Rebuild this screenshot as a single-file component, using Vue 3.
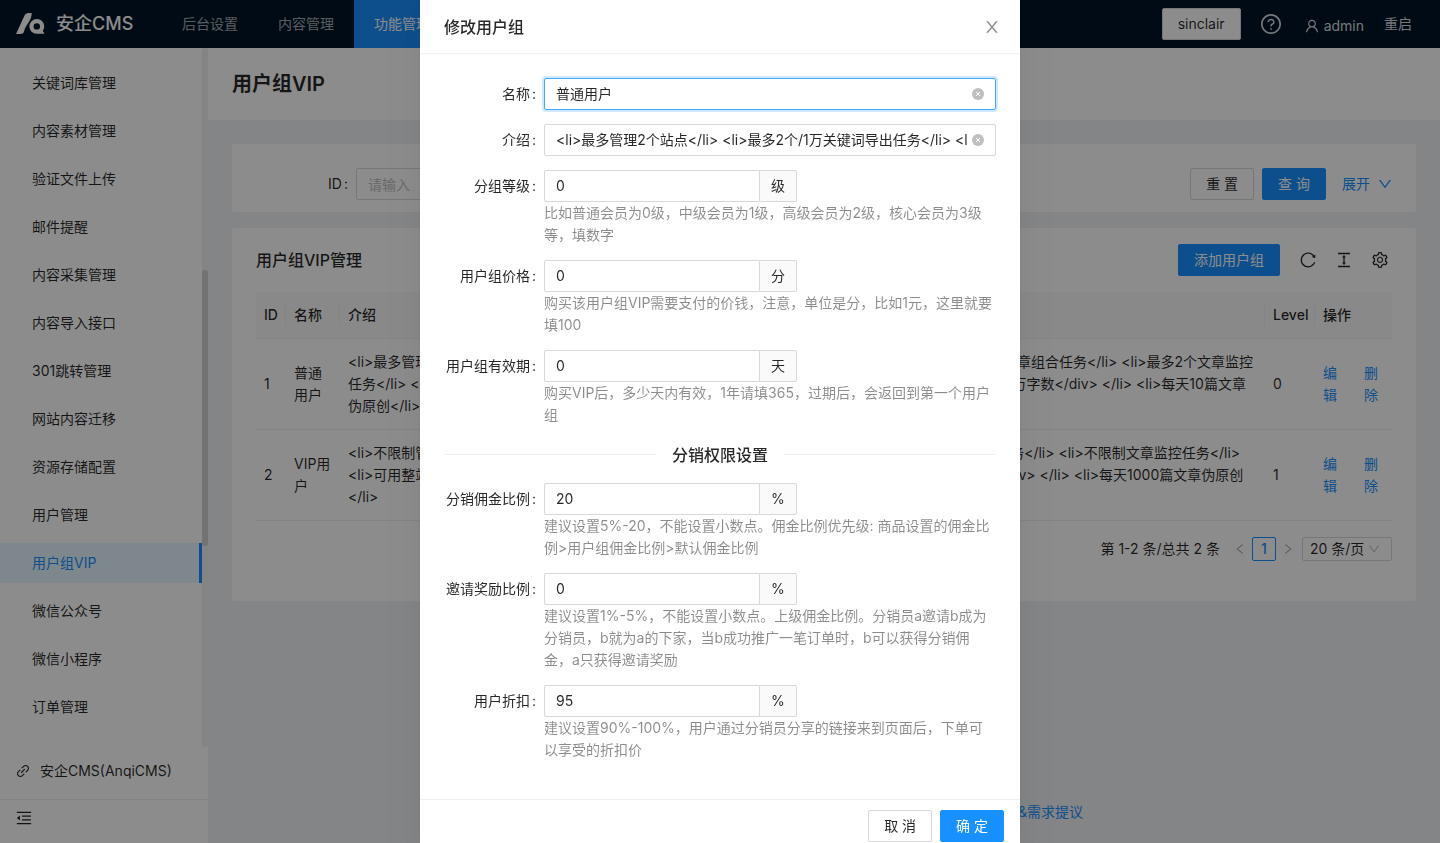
<script setup>
import { ref } from 'vue'

const icons = {
  question: 'M512 64C264.6 64 64 264.6 64 512s200.6 448 448 448 448-200.6 448-448S759.4 64 512 64zm0 820c-205.4 0-372-166.6-372-372s166.6-372 372-372 372 166.6 372 372-166.6 372-372 372zM623.6 316.7C593.6 290.4 554 276 512 276s-81.6 14.5-111.6 40.7C369.2 344 352 380.7 352 420v7.6c0 4.4 3.6 8 8 8h48c4.4 0 8-3.6 8-8V420c0-44.1 43.1-80 96-80s96 35.9 96 80c0 31.1-22 59.6-56.1 72.7-21.2 8.1-39.2 22.3-52.1 40.9-13.1 19-19.9 41.8-19.9 64.9V620c0 4.4 3.6 8 8 8h48c4.4 0 8-3.6 8-8v-22.7a48.3 48.3 0 0130.9-44.8c59-22.7 97.1-74.7 97.1-132.5.1-39.3-17.1-76-48.3-103.3zM472 732a40 40 0 1080 0 40 40 0 10-80 0z',
  user: 'M858.5 763.6a374 374 0 00-80.6-119.5 375.63 375.63 0 00-119.5-80.6c-.4-.2-.8-.3-1.2-.5C719.5 518 760 444.7 760 362c0-137-111-248-248-248S264 225 264 362c0 82.7 40.5 156 102.8 201.1-.4.2-.8.3-1.2.5-44.8 18.9-85 46-119.5 80.6a375.63 375.63 0 00-80.6 119.5A371.7 371.7 0 00136 901.8a8 8 0 008 8.2h60c4.4 0 7.9-3.5 8-7.8 2-77.2 33-149.5 87.8-204.3 56.7-56.7 132-87.9 212.2-87.9s155.5 31.2 212.2 87.9C779 752.7 810 825 812 902.2c.1 4.4 3.6 7.8 8 7.8h60a8 8 0 008-8.2c-1-47.8-10.9-94.3-29.5-138.2zM512 534c-45.9 0-89.1-17.9-121.6-50.4S340 407.9 340 362c0-45.9 17.9-89.1 50.4-121.6S466.1 190 512 190s89.1 17.9 121.6 50.4S684 316.1 684 362c0 45.9-17.9 89.1-50.4 121.6S557.9 534 512 534z',
  close: 'M563.8 512l262.5-312.9c4.4-5.2.7-13.1-6.1-13.1h-79.8c-4.7 0-9.2 2.1-12.3 5.7L511.6 449.8 295.1 191.7c-3-3.6-7.5-5.7-12.3-5.7H203c-6.8 0-10.5 7.9-6.1 13.1L459.4 512 196.9 824.9A7.95 7.95 0 00203 838h79.8c4.7 0 9.2-2.1 12.3-5.7l216.5-258.1 216.5 258.1c3 3.6 7.5 5.7 12.3 5.7h79.8c6.8 0 10.5-7.9 6.1-13.1L563.8 512z',
  down: 'M884 256h-75c-5.1 0-9.9 2.5-12.9 6.6L512 654.2 227.9 262.6c-3-4.1-7.8-6.6-12.9-6.6h-75c-6.5 0-10.3 7.4-6.5 12.7l352.6 486.1c12.8 17.6 39 17.6 51.7 0l352.6-486.1c3.9-5.3.1-12.7-6.4-12.7z',
  left: 'M724 218.3V141c0-6.7-7.7-10.4-12.9-6.3L260.3 486.8a31.86 31.86 0 000 50.3l450.8 352.1c5.3 4.1 12.9.4 12.9-6.3v-77.3c0-4.9-2.3-9.6-6.1-12.6l-360-281 360-281.1c3.8-3 6.1-7.7 6.1-12.6z',
  right: 'M765.7 486.8L314.9 134.7A7.97 7.97 0 00302 141v77.3c0 4.9 2.3 9.6 6.1 12.6l360 281.1-360 281.1c-3.9 3-6.1 7.7-6.1 12.6V883c0 6.7 7.7 10.4 12.9 6.3l450.8-352.1a31.96 31.96 0 000-50.4z',
  reload: 'M909.1 209.3l-56.4 44.1C775.8 155.1 656.2 92 521.9 92 290 92 102.3 279.5 102 511.5 101.7 743.7 289.8 932 521.9 932c181.3 0 335.8-115 394.6-276.1 1.5-4.2-.7-8.9-4.9-10.3l-56.7-19.5a8 8 0 00-10.1 4.8c-1.8 5-3.8 10-5.9 14.9-17.3 41-42.1 77.8-73.7 109.4A344.77 344.77 0 01655.9 829c-42.3 17.9-87.4 27-133.8 27-46.5 0-91.5-9.1-133.8-27A341.5 341.5 0 01279 755.2a342.16 342.16 0 01-73.7-109.4c-17.9-42.4-27-87.4-27-133.9s9.1-91.5 27-133.9c17.3-41 42.1-77.8 73.7-109.4 31.6-31.6 68.4-56.4 109.3-73.8 42.3-17.9 87.4-27 133.8-27 46.5 0 91.5 9.1 133.8 27a341.5 341.5 0 01109.3 73.8c9.9 9.9 19.2 20.4 27.8 31.4l-60.2 47a8 8 0 003 14.1l175.6 43c5 1.2 9.9-2.6 9.9-7.7l.8-180.9c-.1-6.6-7.8-10.3-13-6.2z',
  height: 'M840 836H184c-4.4 0-8 3.6-8 8v60c0 4.4 3.6 8 8 8h656c4.4 0 8-3.6 8-8v-60c0-4.4-3.6-8-8-8zm0-724H184c-4.4 0-8 3.6-8 8v60c0 4.4 3.6 8 8 8h656c4.4 0 8-3.6 8-8v-60c0-4.4-3.6-8-8-8zM610.8 378c6 0 9.4-7 5.7-11.7L515.7 238.7a7.14 7.14 0 00-11.3 0L403.6 366.3a7.23 7.23 0 005.7 11.7H476v268h-62.8c-6 0-9.4 7-5.7 11.7l100.8 127.5c2.9 3.7 8.5 3.7 11.3 0l100.8-127.5c3.7-4.7.4-11.7-5.7-11.7H548V378h62.8z',
  setting: 'M924.8 625.7l-65.5-56c3.1-19 4.7-38.4 4.7-57.8s-1.6-38.8-4.7-57.8l65.5-56a32.03 32.03 0 009.3-35.2l-.9-2.6a443.74 443.74 0 00-79.7-137.9l-1.8-2.1a32.12 32.12 0 00-35.1-9.5l-81.3 28.9c-30-24.6-63.5-44-99.7-57.6l-15.7-85a32.05 32.05 0 00-25.8-25.7l-2.7-.5c-52.1-9.4-106.9-9.4-159 0l-2.7.5a32.05 32.05 0 00-25.8 25.7l-15.8 85.4a351.86 351.86 0 00-99 57.4l-81.9-29.1a32 32 0 00-35.1 9.5l-1.8 2.1a446.02 446.02 0 00-79.7 137.9l-.9 2.6c-4.5 12.5-.8 26.5 9.3 35.2l66.3 56.6c-3.1 18.8-4.6 38-4.6 57.1 0 19.2 1.5 38.4 4.6 57.1L99 625.5a32.03 32.03 0 00-9.3 35.2l.9 2.6c18.1 50.4 44.9 96.9 79.7 137.9l1.8 2.1a32.12 32.12 0 0035.1 9.5l81.9-29.1c29.8 24.5 63.1 43.9 99 57.4l15.8 85.4a32.05 32.05 0 0025.8 25.7l2.7.5a449.4 449.4 0 00159 0l2.7-.5a32.05 32.05 0 0025.8-25.7l15.7-85a350 350 0 0099.7-57.6l81.3 28.9a32 32 0 0035.1-9.5l1.8-2.1c34.8-41.1 61.6-87.5 79.7-137.9l.9-2.6c4.5-12.3.8-26.3-9.3-35zM788.3 465.9c2.5 15.1 3.8 30.6 3.8 46.1s-1.3 31-3.8 46.1l-6.6 40.1 74.7 63.9a370.03 370.03 0 01-42.6 73.6L721 702.8l-31.4 25.8c-23.9 19.6-50.5 35-79.3 45.8l-38.1 14.3-17.9 97a377.5 377.5 0 01-85 0l-17.9-97.2-37.8-14.5c-28.5-10.8-55-26.2-78.7-45.7l-31.4-25.9-93.4 33.2c-17-22.9-31.2-47.6-42.6-73.6l75.5-64.5-6.5-40c-2.4-14.9-3.7-30.3-3.7-45.5 0-15.3 1.2-30.6 3.7-45.5l6.5-40-75.5-64.5c11.3-26.1 25.6-50.7 42.6-73.6l93.4 33.2 31.4-25.9c23.7-19.5 50.2-34.9 78.7-45.7l37.9-14.3 17.9-97.2c28.1-3.2 56.8-3.2 85 0l17.9 97 38.1 14.3c28.7 10.8 55.4 26.2 79.3 45.8l31.4 25.8 92.8-32.9c17 22.9 31.2 47.6 42.6 73.6L781.8 426l6.5 39.9zM512 326c-97.2 0-176 78.8-176 176s78.8 176 176 176 176-78.8 176-176-78.8-176-176-176zm79.2 255.2A111.6 111.6 0 01512 614c-29.9 0-58-11.7-79.2-32.8A111.6 111.6 0 01400 502c0-29.9 11.7-58 32.8-79.2C454 401.6 482.1 390 512 390c29.9 0 58 11.6 79.2 32.8A111.6 111.6 0 01624 502c0 29.9-11.7 58-32.8 79.2z',
  link: 'M574 665.4a8.03 8.03 0 00-11.3 0L446.5 781.6c-53.8 53.8-144.6 59.5-204 0-59.5-59.5-53.8-150.2 0-204l116.2-116.2c3.1-3.1 3.1-8.2 0-11.3l-39.8-39.8a8.03 8.03 0 00-11.3 0L191.4 526.5c-84.6 84.6-84.6 221.5 0 306s221.5 84.6 306 0l116.2-116.2c3.1-3.1 3.1-8.2 0-11.3L574 665.4zm258.6-474c-84.6-84.6-221.5-84.6-306 0L410.3 307.6a8.03 8.03 0 000 11.3l39.7 39.7c3.1 3.1 8.2 3.1 11.3 0l116.2-116.2c53.8-53.8 144.6-59.5 204 0 59.5 59.5 53.8 150.2 0 204L665.3 562.6a8.03 8.03 0 000 11.3l39.8 39.8c3.1 3.1 8.2 3.1 11.3 0l116.2-116.2c84.5-84.6 84.5-221.5 0-306.1zM610.1 372.3a8.03 8.03 0 00-11.3 0L372.3 598.7a8.03 8.03 0 000 11.3l39.6 39.6c3.1 3.1 8.2 3.1 11.3 0l226.4-226.4c3.1-3.1 3.1-8.2 0-11.3l-39.5-39.6z',
  fold: 'M408 442h480c4.4 0 8-3.6 8-8v-56c0-4.4-3.6-8-8-8H408c-4.4 0-8 3.6-8 8v56c0 4.4 3.6 8 8 8zm-8 204c0 4.4 3.6 8 8 8h480c4.4 0 8-3.6 8-8v-56c0-4.4-3.6-8-8-8H408c-4.4 0-8 3.6-8 8v56zm504-486H120c-4.4 0-8 3.6-8 8v56c0 4.4 3.6 8 8 8h784c4.4 0 8-3.6 8-8v-56c0-4.4-3.6-8-8-8zm0 632H120c-4.4 0-8 3.6-8 8v56c0 4.4 3.6 8 8 8h784c4.4 0 8-3.6 8-8v-56c0-4.4-3.6-8-8-8zM115.4 518.9L271.7 642c5.8 4.6 14.4.5 14.4-6.9V388.9c0-7.4-8.5-11.5-14.4-6.9L115.4 505.1a8.74 8.74 0 000 13.8z'
}

const topMenu = ['后台设置', '内容管理', '功能管理']
const sideMenu = [
  '关键词库管理', '内容素材管理', '验证文件上传', '邮件提醒', '内容采集管理',
  '内容导入接口', '301跳转管理', '网站内容迁移', '资源存储配置', '用户管理',
  '用户组VIP', '微信公众号', '微信小程序', '订单管理'
]
const activeSide = '用户组VIP'

const rows = [
  {
    id: 1,
    name: '普通用户',
    lines: [
      '<li>最多管理2个站点</li> <li>最多2个/1万关键词导出任务</li> <li>最多2个伪原创任务</li> <li>最多2个文章组合任务</li> <li>最多2个文章监控',
      '任务</li> <li>可用整站克隆功能</li> <li>可用站群管理功能</li> <li> <div>每天可用于翻译的文章共计100万字数</div> </li> <li>每天10篇文章',
      '伪原创</li>'
    ],
    level: 0
  },
  {
    id: 2,
    name: 'VIP用户',
    lines: [
      '<li>不限制管理站点</li> <li>不限制关键词导出任务</li><li>不限制伪原创任务</li> <li>不限制文章组合任务</li> <li>不限制文章监控任务</li>',
      '<li>可用整站克隆功能</li> <li>可用站群管理功能</li> <li> <div>每天可用于翻译的文章共计100万字数</div> </li> <li>每天1000篇文章伪原创',
      '</li>'
    ],
    level: 1
  }
]

const name = ref('普通用户')
const intro = ref('<li>最多管理2个站点</li> <li>最多2个/1万关键词导出任务</li> <li>最多2个伪原创任务</li>')

const groupFields = ref([
  { key: 'level', label: '分组等级', value: '0', unit: '级', help: '比如普通会员为0级，中级会员为1级，高级会员为2级，核心会员为3级等，填数字' },
  { key: 'price', label: '用户组价格', value: '0', unit: '分', help: '购买该用户组VIP需要支付的价钱，注意，单位是分，比如1元，这里就要填100' },
  { key: 'expire', label: '用户组有效期', value: '0', unit: '天', help: '购买VIP后，多少天内有效，1年请填365，过期后，会返回到第一个用户组' }
])
const shareFields = ref([
  { key: 'share', label: '分销佣金比例', value: '20', unit: '%', help: '建议设置5%-20，不能设置小数点。佣金比例优先级: 商品设置的佣金比例>用户组佣金比例>默认佣金比例' },
  { key: 'parent', label: '邀请奖励比例', value: '0', unit: '%', help: '建议设置1%-5%，不能设置小数点。上级佣金比例。分销员a邀请b成为分销员，b就为a的下家，当b成功推广一笔订单时，b可以获得分销佣金，a只获得邀请奖励' },
  { key: 'discount', label: '用户折扣', value: '95', unit: '%', help: '建议设置90%-100%，用户通过分销员分享的链接来到页面后，下单可以享受的折扣价' }
])
</script>

<template>
  <div class="page">
    <header class="topbar">
      <a class="brand" href="#">
        <svg class="logo" viewBox="0 0 29 22" aria-hidden="true">
          <path d="M8.500 2.500C9.300 1 10.500 0 12.500 0H15.700C15.700 3 14.800 6 13.200 8.500C11 12 9 14 8 18.500C7.500 20.300 6.300 21 4.500 21H0Z" />
          <path fill-rule="evenodd" d="M20.800 6a7.400 7.400 0 1 0 0 14.800H28.500L26.700 17.800A7.400 7.400 0 0 0 20.800 6ZM20.800 10.200a3.200 3.200 0 1 1 0 6.400a3.200 3.200 0 0 1 0-6.400Z" />
        </svg>
        <span>安企CMS</span>
      </a>
      <nav class="topnav">
        <a v-for="(m, i) in topMenu" :key="m" href="#" :class="{ active: i === 2 }">{{ m }}</a>
      </nav>
      <div class="topright">
        <button class="btn site" type="button">sinclair</button>
        <button class="plain help" type="button" aria-label="帮助">
          <svg viewBox="64 64 896 896"><path :d="icons.question" /></svg>
        </button>
        <a class="who" href="#">
          <svg viewBox="64 64 896 896"><path :d="icons.user" /></svg>
          <span>admin</span>
        </a>
        <a href="#">重启</a>
      </div>
    </header>

    <div class="body">
      <aside class="side">
        <div class="side-scroll">
          <nav class="side-menu">
            <a v-for="m in sideMenu" :key="m" href="#" :class="{ active: m === activeSide }">{{ m }}</a>
          </nav>
          <div class="track"><div class="thumb"></div></div>
        </div>
        <a class="side-link" href="#">
          <svg viewBox="64 64 896 896"><path :d="icons.link" /></svg>
          <span>安企CMS(AnqiCMS)</span>
        </a>
        <button class="plain fold" type="button" aria-label="收起菜单">
          <svg viewBox="64 64 896 896"><path :d="icons.fold" /></svg>
        </button>
      </aside>

      <main class="main">
        <div class="page-head"><h1>用户组VIP</h1></div>
        <div class="content">
          <form class="card search" @submit.prevent>
            <label class="caption" for="search-id">ID</label>
            <input id="search-id" class="box" type="text" placeholder="请输入" />
            <div class="actions">
              <button class="btn" type="button">重 置</button>
              <button class="btn primary" type="submit">查 询</button>
              <a class="expand" href="#">展开
                <svg viewBox="64 64 896 896"><path :d="icons.down" /></svg>
              </a>
            </div>
          </form>

          <section class="card list">
            <div class="toolbar">
              <h2>用户组VIP管理</h2>
              <div class="tools">
                <button class="btn primary" type="button">添加用户组</button>
                <button v-for="t in ['reload', 'height', 'setting']" :key="t" class="plain tool" type="button" :aria-label="t">
                  <svg viewBox="64 64 896 896"><path :d="icons[t]" /></svg>
                </button>
              </div>
            </div>
            <table>
              <colgroup>
                <col class="c-id" /><col class="c-name" /><col /><col class="c-level" /><col class="c-op" />
              </colgroup>
              <thead>
                <tr><th>ID</th><th>名称</th><th>介绍</th><th>Level</th><th>操作</th></tr>
              </thead>
              <tbody>
                <tr v-for="r in rows" :key="r.id">
                  <td>{{ r.id }}</td>
                  <td>{{ r.name }}</td>
                  <td><span v-for="l in r.lines" :key="l" class="line">{{ l }}</span></td>
                  <td>{{ r.level }}</td>
                  <td>
                    <div class="ops"><a href="#">编辑</a><a href="#">删除</a></div>
                  </td>
                </tr>
              </tbody>
            </table>
            <div class="pager">
              <span class="total">第 1-2 条/总共 2 条</span>
              <button class="plain arrow" type="button" aria-label="上一页"><svg viewBox="64 64 896 896"><path :d="icons.left" /></svg></button>
              <button class="current" type="button">1</button>
              <button class="plain arrow" type="button" aria-label="下一页"><svg viewBox="64 64 896 896"><path :d="icons.right" /></svg></button>
              <div class="size">
                <select aria-label="每页条数"><option>20 条/页</option></select>
                <svg viewBox="64 64 896 896"><path :d="icons.down" /></svg>
              </div>
            </div>
          </section>
        </div>
        <footer class="foot">
          <a href="#">https://www.anqicms.com</a>
          <a href="#">安企内容管理系统(AnqiCMS)</a>
          <a href="#">问题反馈&amp;需求提议</a>
        </footer>
      </main>
    </div>

    <div class="mask">
      <form class="modal" role="dialog" aria-labelledby="modal-title" @submit.prevent>
        <div class="modal-head">
          <h2 id="modal-title">修改用户组</h2>
          <button class="plain" type="button" aria-label="关闭">
            <svg viewBox="64 64 896 896"><path :d="icons.close" /></svg>
          </button>
        </div>
        <div class="modal-body">
          <div class="field">
            <label class="caption" for="f-name">名称</label>
            <div class="box wide focused">
              <input id="f-name" v-model="name" type="text" />
              <button class="plain clear" type="button" aria-label="清空">
                <svg viewBox="0 0 12 12"><circle cx="6" cy="6" r="6" /><path d="M4 4l4 4M8 4L4 8" /></svg>
              </button>
            </div>
          </div>
          <div class="field">
            <label class="caption" for="f-intro">介绍</label>
            <div class="box wide">
              <input id="f-intro" v-model="intro" type="text" />
              <button class="plain clear" type="button" aria-label="清空">
                <svg viewBox="0 0 12 12"><circle cx="6" cy="6" r="6" /><path d="M4 4l4 4M8 4L4 8" /></svg>
              </button>
            </div>
          </div>
          <div v-for="f in groupFields" :key="f.key" class="field">
            <label class="caption" :for="'f-' + f.key">{{ f.label }}</label>
            <div>
              <div class="group">
                <input :id="'f-' + f.key" v-model="f.value" type="text" /><span>{{ f.unit }}</span>
              </div>
              <p>{{ f.help }}</p>
            </div>
          </div>
          <div class="divider">分销权限设置</div>
          <div v-for="f in shareFields" :key="f.key" class="field">
            <label class="caption" :for="'f-' + f.key">{{ f.label }}</label>
            <div>
              <div class="group">
                <input :id="'f-' + f.key" v-model="f.value" type="text" /><span>{{ f.unit }}</span>
              </div>
              <p>{{ f.help }}</p>
            </div>
          </div>
        </div>
        <div class="modal-foot">
          <button class="btn" type="button">取 消</button>
          <button class="btn primary" type="submit">确 定</button>
        </div>
      </form>
    </div>
  </div>
</template>

<style>
body { margin: 0; }
</style>

<style scoped>
.page, .page * { box-sizing: border-box; }
.page {
  height: 100vh;
  overflow: hidden;
  display: flex;
  flex-direction: column;
  background: #f0f2f5;
  color: rgba(0, 0, 0, .85);
  font: 14px/22px Inter, "Noto Sans CJK SC", sans-serif;
}
a { color: inherit; text-decoration: none; }
button, input, select { font: inherit; color: inherit; margin: 0; }
svg { display: block; width: 14px; height: 14px; fill: currentColor; flex: none; }
h1, h2, p { margin: 0; }
.plain { border: 0; background: none; padding: 0; display: flex; }
.btn {
  height: 32px;
  padding: 0 15px;
  border: 1px solid #d9d9d9;
  border-radius: 2px;
  background: #fff;
  white-space: nowrap;
}
.btn.primary { background: #1890ff; border-color: #1890ff; color: #fff; }
.caption::after { content: ":"; margin: 0 8px 0 2px; }

.topbar { height: 48px; flex: none; display: flex; background: #001529; color: rgba(255, 255, 255, .65); }
.brand { width: 162px; padding-left: 16px; display: flex; align-items: center; gap: 11px; color: #fff; font-size: 18px; font-weight: 500; }
.logo { width: 29px; height: 22px; }
.topnav { display: flex; line-height: 48px; }
.topnav a { padding: 0 20px; }
.topnav a.active { background: #1890ff; color: #fff; }
.topright { margin-left: auto; padding-right: 28px; display: flex; align-items: center; gap: 20px; color: rgba(255, 255, 255, .85); }
.site { color: rgba(0, 0, 0, .85); }
.help svg { width: 20px; height: 20px; }
.who { display: flex; align-items: center; gap: 5px; padding: 4px 0 0 4px; }

.body { flex: 1; min-height: 0; display: flex; }
.side { width: 208px; flex: none; background: #fff; display: flex; flex-direction: column; }
.side-scroll { flex: 1; min-height: 0; display: flex; }
.side-menu { flex: 1; padding-top: 15px; display: flex; flex-direction: column; gap: 8px; overflow: hidden; }
.side-menu a { height: 40px; flex: none; line-height: 40px; padding-left: 32px; }
.side-menu a.active { background: #e6f7ff; color: #1890ff; border-right: 3px solid #1890ff; }
.track { width: 6px; background: #f0f0f0; border-radius: 3px; padding-top: 222px; }
.thumb { height: 276px; border-radius: 3px; background: #d2d2d2; }
.side-link { height: 40px; margin: 4px 0 8px; padding-left: 16px; display: flex; align-items: center; gap: 10px; }
.fold { height: 44px; padding: 10px 16px; border-top: 1px solid #f0f0f0; }
.fold svg { width: 16px; height: 16px; }

.main { flex: 1; min-width: 0; display: flex; flex-direction: column; }
.page-head { height: 72px; flex: none; padding: 0 24px; display: flex; align-items: center; background: #fff; }
.page-head h1 { font-size: 20px; line-height: 32px; font-weight: 600; }
.content { padding: 24px; display: flex; flex-direction: column; gap: 16px; }
.card { background: #fff; border-radius: 2px; }
.search { padding: 24px 24px 12px; display: flex; align-items: center; }
.search label { width: 100px; text-align: right; }
.search .box { width: 250px; height: 32px; padding: 0 11px; border: 1px solid #d9d9d9; border-radius: 2px; background: #fff; }
.search .box::placeholder { color: #bfbfbf; }
.actions { margin-left: auto; display: flex; align-items: center; gap: 8px; }
.expand { display: flex; align-items: center; gap: 8px; padding-left: 8px; color: #1890ff; }

.list { padding: 0 24px 40px; }
.toolbar { height: 64px; display: flex; align-items: center; justify-content: space-between; }
.toolbar h2 { font-size: 16px; line-height: 24px; font-weight: 500; }
.tools { display: flex; align-items: center; gap: 20px; padding-right: 4px; }
.tool svg { width: 16px; height: 16px; }
table { width: 100%; table-layout: fixed; border-collapse: separate; border-spacing: 0; }
.c-id { width: 30px; }
.c-name { width: 54px; }
.c-level { width: 50px; }
.c-op { width: 77px; }
th, td { padding: 12px 8px; border-bottom: 1px solid #f0f0f0; text-align: left; }
th {
  background: linear-gradient(#f0f0f0, #f0f0f0) right center / 1px 22px no-repeat #fafafa;
  font-weight: 500;
  white-space: nowrap;
}
th:last-child { background: #fafafa; }
.line { display: block; white-space: nowrap; }
.ops { display: flex; gap: 26px; color: #1890ff; }
.ops a { width: 15px; }
.pager { margin-top: 16px; height: 24px; display: flex; justify-content: flex-end; align-items: center; }
.total { margin-right: 8px; }
.arrow { width: 24px; height: 24px; align-items: center; justify-content: center; color: rgba(0, 0, 0, .35); }
.arrow svg { width: 12px; height: 12px; }
.current { width: 24px; height: 24px; padding: 0; border: 1px solid #1890ff; border-radius: 2px; background: #fff; color: #1890ff; font-weight: 500; }
.size { width: 90px; height: 24px; margin-left: 2px; padding: 0 11px 0 7px; display: flex; align-items: center; border: 1px solid #d9d9d9; border-radius: 2px; }
.size select { flex: 1; min-width: 0; border: 0; padding: 0; background: none; appearance: none; }
.size svg { width: 12px; height: 12px; color: rgba(0, 0, 0, .25); }
.foot { margin-top: auto; padding-bottom: 20px; display: flex; justify-content: center; gap: 20px; color: #1890ff; }

.mask { position: fixed; inset: 0; overflow: hidden; display: flex; justify-content: center; align-items: flex-start; background: rgba(0, 0, 0, .45); }
.modal { width: 600px; max-width: 100%; background: #fff; box-shadow: 0 6px 16px -8px rgba(0, 0, 0, .08), 0 9px 28px 0 rgba(0, 0, 0, .05), 0 12px 48px 16px rgba(0, 0, 0, .03); }
.modal-head { height: 54px; padding: 0 20px 0 24px; display: flex; align-items: center; justify-content: space-between; border-bottom: 1px solid #f0f0f0; }
.modal-head h2 { font-size: 16px; line-height: 22px; font-weight: 500; }
.modal-head svg { width: 16px; height: 16px; color: rgba(0, 0, 0, .45); }
.modal-body { padding: 24px 24px 38px; display: flex; flex-direction: column; gap: 14px; }
.field { display: grid; grid-template-columns: 100px 1fr; }
.field label { height: 32px; line-height: 32px; text-align: right; white-space: nowrap; }
.box.wide { height: 32px; padding: 0 11px; display: flex; align-items: center; gap: 4px; border: 1px solid #d9d9d9; border-radius: 2px; }
.box.focused { border-color: #40a9ff; box-shadow: 0 0 0 2px rgba(24, 144, 255, .2); }
.box.wide input { flex: 1; min-width: 0; padding: 0; border: 0; outline: 0; background: none; }
.clear svg { width: 12px; height: 12px; fill: #bfbfbf; stroke: #fff; }
.clear circle { stroke: none; }
.group { display: flex; height: 32px; }
.group input { width: 216px; padding: 0 11px; border: 1px solid #d9d9d9; border-radius: 2px 0 0 2px; background: #fff; }
.group span { padding: 0 11px; line-height: 30px; border: 1px solid #d9d9d9; border-left: 0; border-radius: 0 2px 2px 0; background: #fafafa; }
.field p { color: rgba(0, 0, 0, .45); }
.divider { display: flex; align-items: center; gap: 16px; height: 29px; font-size: 16px; font-weight: 500; }
.divider::before, .divider::after { content: ""; flex: 1; border-top: 1px solid #f0f0f0; }
.modal-foot { padding: 10px 16px; display: flex; justify-content: flex-end; gap: 8px; border-top: 1px solid #f0f0f0; }
</style>
